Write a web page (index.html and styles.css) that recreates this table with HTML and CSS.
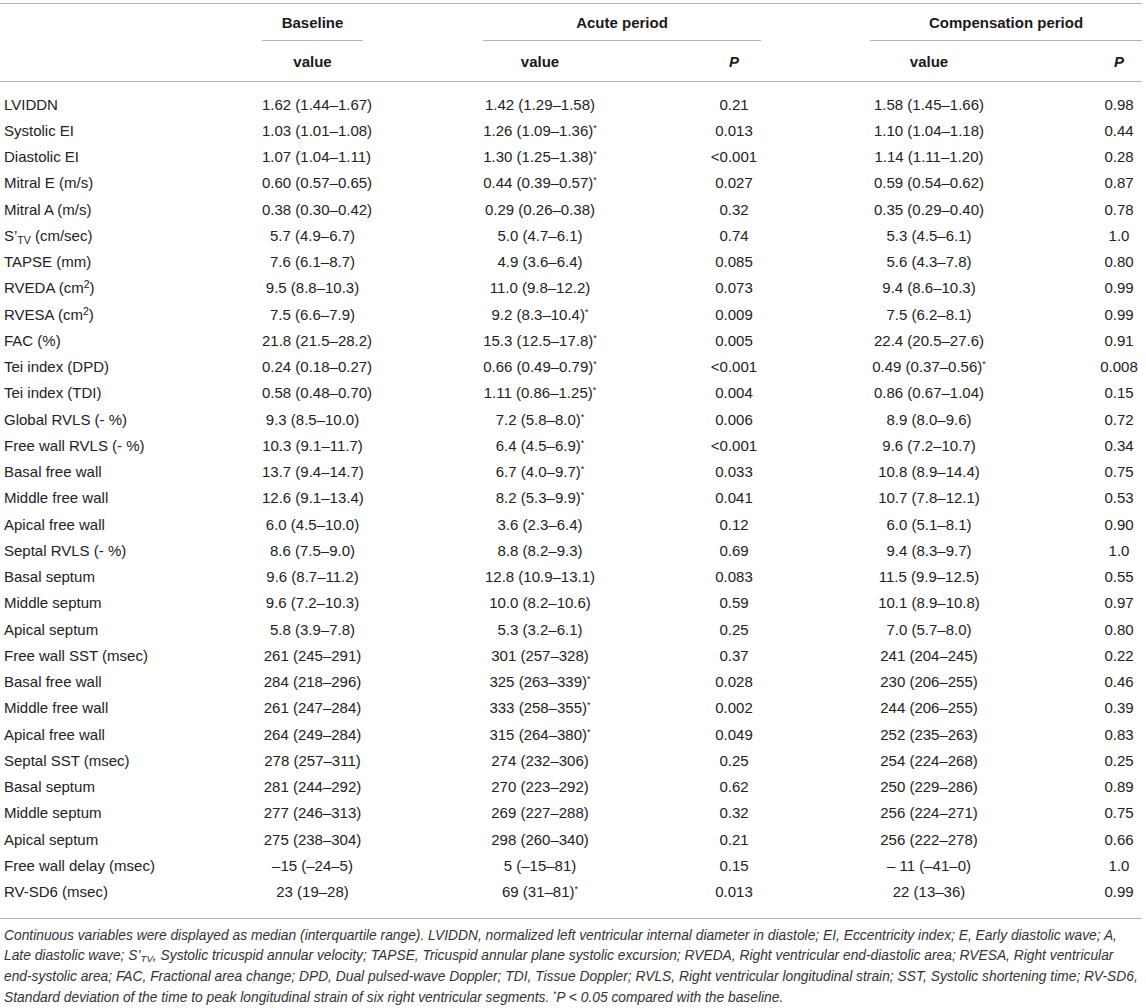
FILE: index.html
```html
<!DOCTYPE html>
<html lang="en">
<head>
<meta charset="utf-8">
<title>Table</title>
<link rel="stylesheet" href="styles.css">
</head>
<body>
<div class="table">
  <div class="head">
    <div class="row hrow1">
      <div class="cell c-base grp">Baseline</div>
      <div class="cell g-acute grp">Acute period</div>
      <div class="cell g-comp grp">Compensation period</div>
    </div>
    <div class="row hrow2">
      <div class="cell c-base">value</div>
      <div class="cell c-av">value</div>
      <div class="cell c-ap"><i>P</i></div>
      <div class="cell c-cv">value</div>
      <div class="cell c-cp"><i>P</i></div>
    </div>
  </div>
  <div class="body">
    <div class="row"><div class="cell lab">LVIDDN</div><div class="cell c-base">1.62 (1.44–1.67)</div><div class="cell c-av">1.42 (1.29–1.58)</div><div class="cell c-ap">0.21</div><div class="cell c-cv">1.58 (1.45–1.66)</div><div class="cell c-cp">0.98</div></div>
    <div class="row"><div class="cell lab">Systolic EI</div><div class="cell c-base">1.03 (1.01–1.08)</div><div class="cell c-av">1.26 (1.09–1.36)<sup>*</sup></div><div class="cell c-ap">0.013</div><div class="cell c-cv">1.10 (1.04–1.18)</div><div class="cell c-cp">0.44</div></div>
    <div class="row"><div class="cell lab">Diastolic EI</div><div class="cell c-base">1.07 (1.04–1.11)</div><div class="cell c-av">1.30 (1.25–1.38)<sup>*</sup></div><div class="cell c-ap">&lt;0.001</div><div class="cell c-cv">1.14 (1.11–1.20)</div><div class="cell c-cp">0.28</div></div>
    <div class="row"><div class="cell lab">Mitral E (m/s)</div><div class="cell c-base">0.60 (0.57–0.65)</div><div class="cell c-av">0.44 (0.39–0.57)<sup>*</sup></div><div class="cell c-ap">0.027</div><div class="cell c-cv">0.59 (0.54–0.62)</div><div class="cell c-cp">0.87</div></div>
    <div class="row"><div class="cell lab">Mitral A (m/s)</div><div class="cell c-base">0.38 (0.30–0.42)</div><div class="cell c-av">0.29 (0.26–0.38)</div><div class="cell c-ap">0.32</div><div class="cell c-cv">0.35 (0.29–0.40)</div><div class="cell c-cp">0.78</div></div>
    <div class="row"><div class="cell lab">S’<sub>TV</sub> (cm/sec)</div><div class="cell c-base">5.7 (4.9–6.7)</div><div class="cell c-av">5.0 (4.7–6.1)</div><div class="cell c-ap">0.74</div><div class="cell c-cv">5.3 (4.5–6.1)</div><div class="cell c-cp">1.0</div></div>
    <div class="row"><div class="cell lab">TAPSE (mm)</div><div class="cell c-base">7.6 (6.1–8.7)</div><div class="cell c-av">4.9 (3.6–6.4)</div><div class="cell c-ap">0.085</div><div class="cell c-cv">5.6 (4.3–7.8)</div><div class="cell c-cp">0.80</div></div>
    <div class="row"><div class="cell lab">RVEDA (cm<sup class="pw">2</sup>)</div><div class="cell c-base">9.5 (8.8–10.3)</div><div class="cell c-av">11.0 (9.8–12.2)</div><div class="cell c-ap">0.073</div><div class="cell c-cv">9.4 (8.6–10.3)</div><div class="cell c-cp">0.99</div></div>
    <div class="row"><div class="cell lab">RVESA (cm<sup class="pw">2</sup>)</div><div class="cell c-base">7.5 (6.6–7.9)</div><div class="cell c-av">9.2 (8.3–10.4)<sup>*</sup></div><div class="cell c-ap">0.009</div><div class="cell c-cv">7.5 (6.2–8.1)</div><div class="cell c-cp">0.99</div></div>
    <div class="row"><div class="cell lab">FAC (%)</div><div class="cell c-base">21.8 (21.5–28.2)</div><div class="cell c-av">15.3 (12.5–17.8)<sup>*</sup></div><div class="cell c-ap">0.005</div><div class="cell c-cv">22.4 (20.5–27.6)</div><div class="cell c-cp">0.91</div></div>
    <div class="row"><div class="cell lab">Tei index (DPD)</div><div class="cell c-base">0.24 (0.18–0.27)</div><div class="cell c-av">0.66 (0.49–0.79)<sup>*</sup></div><div class="cell c-ap">&lt;0.001</div><div class="cell c-cv">0.49 (0.37–0.56)<sup>*</sup></div><div class="cell c-cp">0.008</div></div>
    <div class="row"><div class="cell lab">Tei index (TDI)</div><div class="cell c-base">0.58 (0.48–0.70)</div><div class="cell c-av">1.11 (0.86–1.25)<sup>*</sup></div><div class="cell c-ap">0.004</div><div class="cell c-cv">0.86 (0.67–1.04)</div><div class="cell c-cp">0.15</div></div>
    <div class="row"><div class="cell lab">Global RVLS (- %)</div><div class="cell c-base">9.3 (8.5–10.0)</div><div class="cell c-av">7.2 (5.8–8.0)<sup>*</sup></div><div class="cell c-ap">0.006</div><div class="cell c-cv">8.9 (8.0–9.6)</div><div class="cell c-cp">0.72</div></div>
    <div class="row"><div class="cell lab">Free wall RVLS (- %)</div><div class="cell c-base">10.3 (9.1–11.7)</div><div class="cell c-av">6.4 (4.5–6.9)<sup>*</sup></div><div class="cell c-ap">&lt;0.001</div><div class="cell c-cv">9.6 (7.2–10.7)</div><div class="cell c-cp">0.34</div></div>
    <div class="row"><div class="cell lab">Basal free wall</div><div class="cell c-base">13.7 (9.4–14.7)</div><div class="cell c-av">6.7 (4.0–9.7)<sup>*</sup></div><div class="cell c-ap">0.033</div><div class="cell c-cv">10.8 (8.9–14.4)</div><div class="cell c-cp">0.75</div></div>
    <div class="row"><div class="cell lab">Middle free wall</div><div class="cell c-base">12.6 (9.1–13.4)</div><div class="cell c-av">8.2 (5.3–9.9)<sup>*</sup></div><div class="cell c-ap">0.041</div><div class="cell c-cv">10.7 (7.8–12.1)</div><div class="cell c-cp">0.53</div></div>
    <div class="row"><div class="cell lab">Apical free wall</div><div class="cell c-base">6.0 (4.5–10.0)</div><div class="cell c-av">3.6 (2.3–6.4)</div><div class="cell c-ap">0.12</div><div class="cell c-cv">6.0 (5.1–8.1)</div><div class="cell c-cp">0.90</div></div>
    <div class="row"><div class="cell lab">Septal RVLS (- %)</div><div class="cell c-base">8.6 (7.5–9.0)</div><div class="cell c-av">8.8 (8.2–9.3)</div><div class="cell c-ap">0.69</div><div class="cell c-cv">9.4 (8.3–9.7)</div><div class="cell c-cp">1.0</div></div>
    <div class="row"><div class="cell lab">Basal septum</div><div class="cell c-base">9.6 (8.7–11.2)</div><div class="cell c-av">12.8 (10.9–13.1)</div><div class="cell c-ap">0.083</div><div class="cell c-cv">11.5 (9.9–12.5)</div><div class="cell c-cp">0.55</div></div>
    <div class="row"><div class="cell lab">Middle septum</div><div class="cell c-base">9.6 (7.2–10.3)</div><div class="cell c-av">10.0 (8.2–10.6)</div><div class="cell c-ap">0.59</div><div class="cell c-cv">10.1 (8.9–10.8)</div><div class="cell c-cp">0.97</div></div>
    <div class="row"><div class="cell lab">Apical septum</div><div class="cell c-base">5.8 (3.9–7.8)</div><div class="cell c-av">5.3 (3.2–6.1)</div><div class="cell c-ap">0.25</div><div class="cell c-cv">7.0 (5.7–8.0)</div><div class="cell c-cp">0.80</div></div>
    <div class="row"><div class="cell lab">Free wall SST (msec)</div><div class="cell c-base">261 (245–291)</div><div class="cell c-av">301 (257–328)</div><div class="cell c-ap">0.37</div><div class="cell c-cv">241 (204–245)</div><div class="cell c-cp">0.22</div></div>
    <div class="row"><div class="cell lab">Basal free wall</div><div class="cell c-base">284 (218–296)</div><div class="cell c-av">325 (263–339)<sup>*</sup></div><div class="cell c-ap">0.028</div><div class="cell c-cv">230 (206–255)</div><div class="cell c-cp">0.46</div></div>
    <div class="row"><div class="cell lab">Middle free wall</div><div class="cell c-base">261 (247–284)</div><div class="cell c-av">333 (258–355)<sup>*</sup></div><div class="cell c-ap">0.002</div><div class="cell c-cv">244 (206–255)</div><div class="cell c-cp">0.39</div></div>
    <div class="row"><div class="cell lab">Apical free wall</div><div class="cell c-base">264 (249–284)</div><div class="cell c-av">315 (264–380)<sup>*</sup></div><div class="cell c-ap">0.049</div><div class="cell c-cv">252 (235–263)</div><div class="cell c-cp">0.83</div></div>
    <div class="row"><div class="cell lab">Septal SST (msec)</div><div class="cell c-base">278 (257–311)</div><div class="cell c-av">274 (232–306)</div><div class="cell c-ap">0.25</div><div class="cell c-cv">254 (224–268)</div><div class="cell c-cp">0.25</div></div>
    <div class="row"><div class="cell lab">Basal septum</div><div class="cell c-base">281 (244–292)</div><div class="cell c-av">270 (223–292)</div><div class="cell c-ap">0.62</div><div class="cell c-cv">250 (229–286)</div><div class="cell c-cp">0.89</div></div>
    <div class="row"><div class="cell lab">Middle septum</div><div class="cell c-base">277 (246–313)</div><div class="cell c-av">269 (227–288)</div><div class="cell c-ap">0.32</div><div class="cell c-cv">256 (224–271)</div><div class="cell c-cp">0.75</div></div>
    <div class="row"><div class="cell lab">Apical septum</div><div class="cell c-base">275 (238–304)</div><div class="cell c-av">298 (260–340)</div><div class="cell c-ap">0.21</div><div class="cell c-cv">256 (222–278)</div><div class="cell c-cp">0.66</div></div>
    <div class="row"><div class="cell lab">Free wall delay (msec)</div><div class="cell c-base">–15 (–24–5)</div><div class="cell c-av">5 (–15–81)</div><div class="cell c-ap">0.15</div><div class="cell c-cv">– 11 (–41–0)</div><div class="cell c-cp">1.0</div></div>
    <div class="row"><div class="cell lab">RV-SD6 (msec)</div><div class="cell c-base">23 (19–28)</div><div class="cell c-av">69 (31–81)<sup>*</sup></div><div class="cell c-ap">0.013</div><div class="cell c-cv">22 (13–36)</div><div class="cell c-cp">0.99</div></div>
  </div>
  <p class="note">Continuous variables were displayed as median (interquartile range). LVIDDN, normalized left ventricular internal diameter in diastole; EI, Eccentricity index; E, Early diastolic wave; A,<br>Late diastolic wave; S’<sub>TV</sub>, Systolic tricuspid annular velocity; TAPSE, Tricuspid annular plane systolic excursion; RVEDA, Right ventricular end-diastolic area; RVESA, Right ventricular<br>end-systolic area; FAC, Fractional area change; DPD, Dual pulsed-wave Doppler; TDI, Tissue Doppler; RVLS, Right ventricular longitudinal strain; SST, Systolic shortening time; RV-SD6,<br>Standard deviation of the time to peak longitudinal strain of six right ventricular segments. <sup>*</sup>P &lt; 0.05 compared with the baseline.</p>
</div>
</body>
</html>
```

FILE: styles.css
```css
html, body {
  margin: 0;
  padding: 0;
  background: #ffffff;
}

body {
  font-family: "Liberation Sans", Arial, Helvetica, sans-serif;
  color: #222222;
}

.table {
  width: 1142px;
  margin-top: 3px;
  border-top: 1px solid #b4b4b4;
}

.row {
  display: grid;
  grid-template-columns: 262px 101px 120px 114px 110px 54px 109px 118px 108px 46px;
  align-items: center;
  font-size: 15px;
}

.cell {
  text-align: center;
  white-space: nowrap;
}

.lab {
  grid-column: 1;
  text-align: left;
  padding-left: 4px;
}

.c-base { grid-column: 2; }
.c-av { grid-column: 4; }
.c-ap { grid-column: 6; }
.c-cv { grid-column: 8; }
.c-cp { grid-column: 10; }

.g-acute { grid-column: 4 / 7; }
.g-comp { grid-column: 8 / 11; }

.head {
  border-bottom: 1px solid #b4b4b4;
  font-weight: bold;
  color: #1a1a1a;
}

.hrow1 {
  height: 37px;
  align-items: stretch;
}

.grp {
  display: flex;
  align-items: center;
  justify-content: center;
  border-bottom: 1px solid #b4b4b4;
}

.hrow2 {
  height: 40px;
}

.body {
  padding: 9px 0 13px;
  border-bottom: 1px solid #b4b4b4;
}

.body .row {
  height: 26.25px;
}

sup {
  font-size: 0.6em;
  vertical-align: 0.55em;
  line-height: 0;
}

sup.pw {
  font-size: 0.7em;
  vertical-align: 0.5em;
}

sub {
  font-size: 0.7em;
  vertical-align: -0.25em;
  line-height: 0;
}

.note {
  margin: 0;
  padding: 7px 4px 0;
  font-size: 13.8px;
  font-style: italic;
  line-height: 20.6px;
  color: #333333;
  white-space: nowrap;
}
```
